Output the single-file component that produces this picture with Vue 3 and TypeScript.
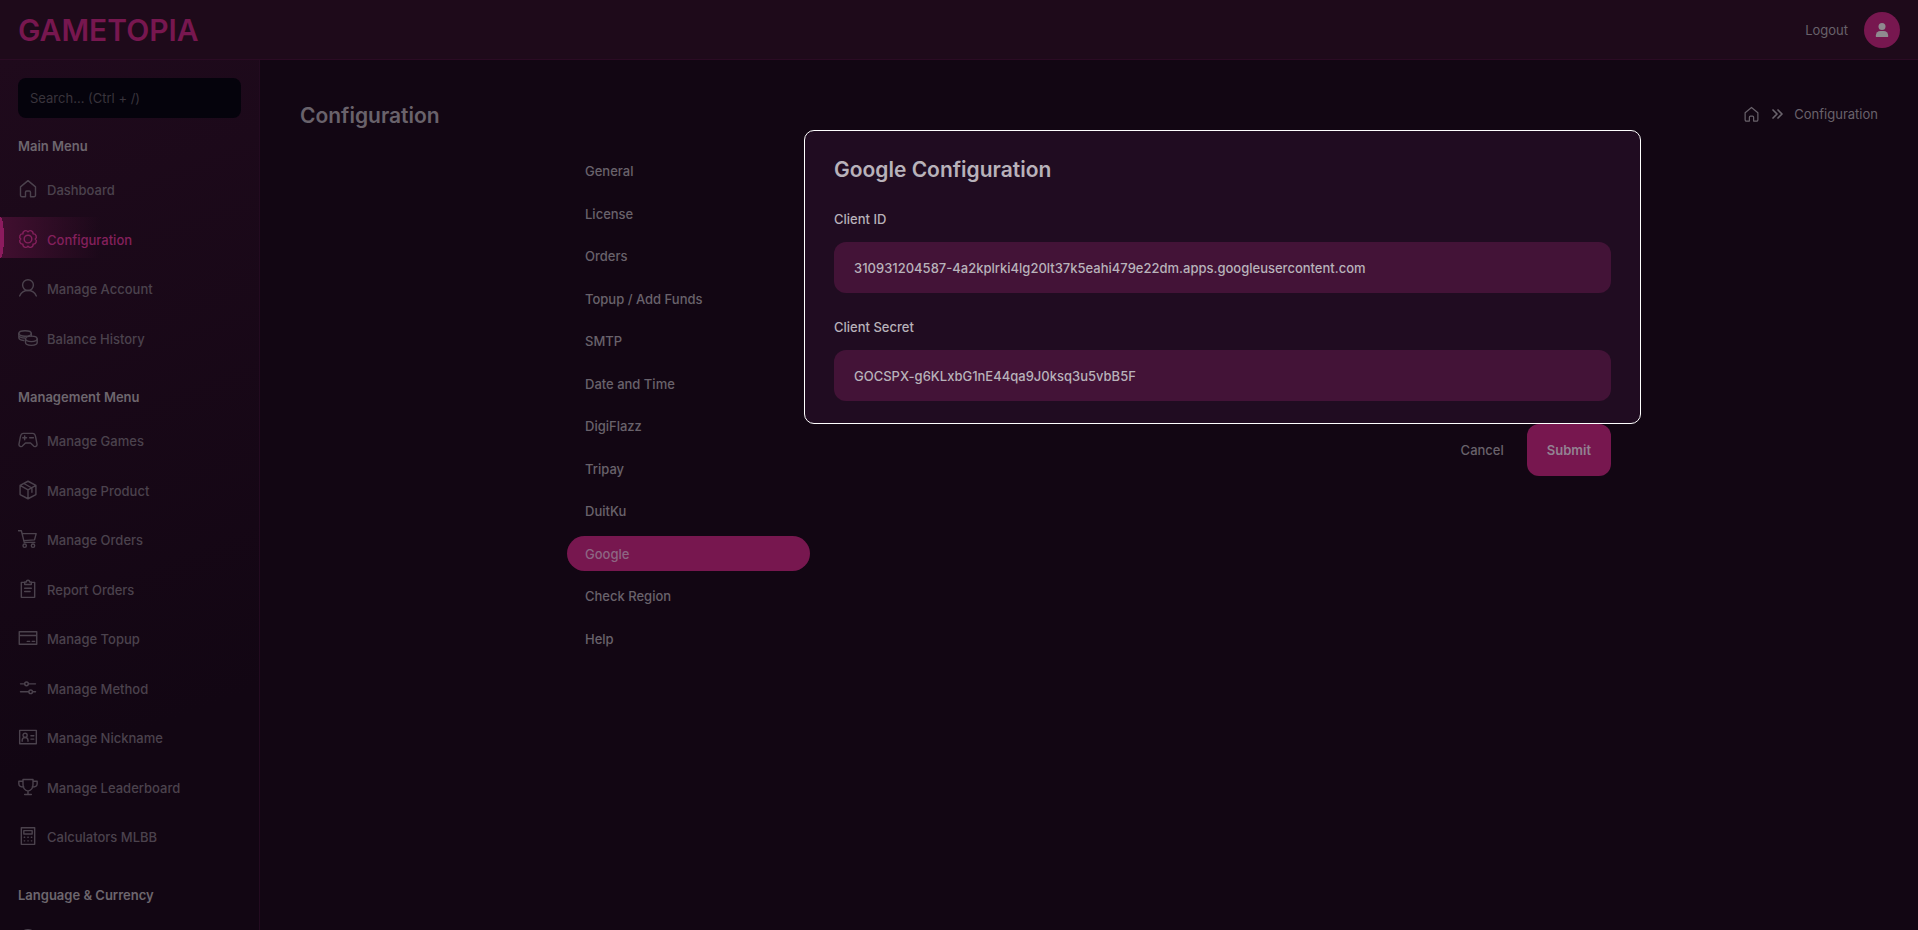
<script setup lang="ts">
import { ref } from 'vue'

interface Item { label: string; icon: string; iconOnly?: boolean }
interface Group { title: string; items: Item[] }

const icons: Record<string, string> = {
  home: '<path d="M3 9.500v10a1.800 1.800 0 0 0 1.800 1.800h4.200v-5.500a1.500 1.500 0 0 1 1.500-1.500h3a1.500 1.500 0 0 1 1.500 1.500v5.500h4.200a1.800 1.800 0 0 0 1.800-1.800v-10L12 2Z"/>',
  gear: '<circle cx="12" cy="12" r="4.600"/><path d="M12 3.400A3.400 3.400 0 0 1 18.100 5.900A3.400 3.400 0 0 1 20.600 12A3.400 3.400 0 0 1 18.100 18.100A3.400 3.400 0 0 1 12 20.600A3.400 3.400 0 0 1 5.900 18.100A3.400 3.400 0 0 1 3.400 12A3.400 3.400 0 0 1 5.900 5.900A3.400 3.400 0 0 1 12 3.400Z"/>',
  user: '<circle cx="12" cy="8.500" r="6.500"/><path d="M2 21.500c1.700-4 5-6.500 10-6.500s8.300 2.500 10 6.500"/>',
  coins: '<ellipse cx="8.500" cy="6.500" rx="7.500" ry="3.300"/><path d="M1 6.500v5c0 2 2.500 3.300 6 3.500M16 6.500v3M1 9.500c1 1.500 3.500 2.500 7 2.500"/><ellipse cx="16" cy="13" rx="7" ry="3.300"/><path d="M9 13v4.500c0 2 3 3.300 7 3.300s7-1.300 7-3.300V13"/>',
  games: '<path d="M6.500 4h11c2.500 0 3.300 2 3.700 4.500l1.600 8.500c.4 2.500-2.700 4-4.300 2L15 15.500H9L5.500 19c-1.600 2-4.700.5-4.300-2l1.600-8.500C3.200 6 4 4 6.500 4ZM8 7v4.600M5.700 9.300h4.600M14 9.300h4.500"/>',
  box: '<path d="m12 1.500 9.500 5v11L12 22.500l-9.500-5v-11ZM2.500 6.500 12 11.800l9.500-5.300M12 11.800v10.700M7 4.200l9.700 5.400v5.200"/>',
  cart: '<path d="M.5 2H4l3.500 14h12.700M4.800 5.500h17l-2 7.500L6.800 14"/><circle cx="8" cy="20" r="2"/><circle cx="18" cy="20" r="2"/>',
  clipboard: '<path d="M8 4H4v18h16V4h-4M8 6.500h8V3.500h-2c0-1-1-2-2-2s-2 1-2 2H8ZM8 11h8M8 15h6.500"/>',
  card: '<path d="M1.500 4.500h21v15h-21ZM1.500 9h21M11 16h3M17 16h3"/>',
  sliders: '<path d="M3 7h5M12.500 7H21M3 16.500h10M17.500 16.500H21"/><circle cx="10.200" cy="7" r="2.200"/><circle cx="15.200" cy="16.500" r="2.200"/>',
  id: '<path d="M2 4h20v16H2ZM5 17v-1c0-2.500 1.500-3.500 3.500-3.500s3.500 1 3.500 3.500v1M15.500 10.500H19M15.500 14.500H19"/><circle cx="8.500" cy="10" r="2.500"/>',
  trophy: '<path d="M6 3h12v6c0 4-2 7-6 8-4-1-6-4-6-8ZM6 5H1v3c0 2.500 2 4 6 4M18 5h5v3c0 2.500-2 4-6 4M12 17v4M8 21h8"/>',
  calc: '<path d="M4 2h16v20H4ZM7 5.500h10v4H7ZM7.500 13.500h.5M11.800 13.500h.5M16 13.500h.5M7.500 17.800h.5M11.800 17.800h.5M16 17.800h.5"/>',
  globe: '<circle cx="12" cy="12" r="10"/><path d="M2 12h20M12 2v20"/>',
}

const groups: Group[] = [
  { title: 'Main Menu', items: [
    { label: 'Dashboard', icon: 'home' },
    { label: 'Configuration', icon: 'gear' },
    { label: 'Manage Account', icon: 'user' },
    { label: 'Balance History', icon: 'coins' },
  ] },
  { title: 'Management Menu', items: [
    { label: 'Manage Games', icon: 'games' },
    { label: 'Manage Product', icon: 'box' },
    { label: 'Manage Orders', icon: 'cart' },
    { label: 'Report Orders', icon: 'clipboard' },
    { label: 'Manage Topup', icon: 'card' },
    { label: 'Manage Method', icon: 'sliders' },
    { label: 'Manage Nickname', icon: 'id' },
    { label: 'Manage Leaderboard', icon: 'trophy' },
    { label: 'Calculators MLBB', icon: 'calc' },
  ] },
  { title: 'Language & Currency', items: [{ label: 'Language', icon: 'globe', iconOnly: true }] },
]

const tabs = ['General', 'License', 'Orders', 'Topup / Add Funds', 'SMTP', 'Date and Time', 'DigiFlazz', 'Tripay', 'DuitKu', 'Google', 'Check Region', 'Help']
const activeTab = ref('Google')
const clientId = ref('310931204587-4a2kplrki4lg20lt37k5eahi479e22dm.apps.googleusercontent.com')
const clientSecret = ref('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')
const search = ref('')
</script>

<template>
  <div class="app">
    <header class="topbar">
      <a class="logo" href="#">GAMETOPIA</a>
      <div class="account">
        <a href="#">Logout</a>
        <button class="avatar" type="button" aria-label="Account">
          <svg viewBox="0 0 16 16" width="14" height="16"><circle cx="8" cy="4" r="4" /><path d="M1 16v-2a5 5 0 0 1 5-5h4a5 5 0 0 1 5 5v2Z" /></svg>
        </button>
      </div>
    </header>
    <div class="body">
      <aside class="sidebar">
        <input v-model="search" class="search" type="text" aria-label="Search" placeholder="Search... (Ctrl + /)">
        <nav v-for="g in groups" :key="g.title" class="group" :aria-label="g.title">
          <h2>{{ g.title }}</h2>
          <a v-for="i in g.items" :key="i.label" href="#" class="item" :class="{ active: i.label === 'Configuration' }" :aria-label="i.label">
            <svg class="line" viewBox="0 0 24 24" width="20" height="20" v-html="icons[i.icon]" />
            <span v-if="!i.iconOnly">{{ i.label }}</span>
          </a>
        </nav>
      </aside>
      <main class="main">
        <div class="heading">
          <h1>Configuration</h1>
          <nav class="crumbs" aria-label="Breadcrumb">
            <a href="#" aria-label="Home"><svg class="line" viewBox="0 0 24 24" width="17" height="17" v-html="icons.home" /></a>
            <svg class="line chevrons" viewBox="0 0 12 12" width="12" height="12"><path d="m2 2 4 4-4 4M7 2l4 4-4 4" /></svg>
            <span>Configuration</span>
          </nav>
        </div>
        <div class="content">
          <div class="tabs">
            <button v-for="t in tabs" :key="t" type="button" :class="{ active: t === activeTab }" @click="activeTab = t">{{ t }}</button>
          </div>
          <form class="form" @submit.prevent>
            <section class="panel">
              <h2>Google Configuration</h2>
              <div class="field">
                <label for="client-id">Client ID</label>
                <input id="client-id" v-model="clientId" type="text">
              </div>
              <div class="field">
                <label for="client-secret">Client Secret</label>
                <input id="client-secret" v-model="clientSecret" type="text">
              </div>
            </section>
            <div class="actions">
              <button class="cancel" type="button">Cancel</button>
              <button class="submit" type="submit">Submit</button>
            </div>
          </form>
        </div>
      </main>
    </div>
  </div>
</template>

<style>
body { margin: 0; background: #120613; }
</style>

<style scoped>
* { box-sizing: border-box; }
.app { height: 100vh; display: flex; flex-direction: column; overflow: hidden; background: #120613; color: #69626b; font: 500 13px/20px Inter, sans-serif; }
a { color: inherit; text-decoration: none; }
button, input { font: inherit; color: inherit; border: 0; margin: 0; }
button { cursor: pointer; }
h1, h2 { margin: 0; }
.line { fill: none; stroke: currentColor; stroke-width: 1.7; stroke-linecap: round; stroke-linejoin: round; flex: none; }
.topbar { height: 60px; flex: none; display: flex; align-items: center; justify-content: space-between; padding: 0 18px; background: #1e0a1a; border-bottom: 1px solid #2b0b24; }
.logo { color: #77174f; font-size: 30px; line-height: 36px; font-weight: 600; }
.account { display: flex; align-items: center; gap: 16px; font-weight: 400; }
.avatar { width: 36px; height: 36px; border-radius: 50%; background: #77174f; display: grid; place-items: center; padding: 0; }
.avatar svg { fill: #8f8a8f; }
.body { flex: 1; min-height: 0; display: flex; }
.sidebar { width: 260px; flex: none; overflow: hidden; padding-top: 18px; background: linear-gradient(160deg, #1f0a1c, #120613 75%); border-right: 1px solid #230b20; }
.search { display: block; width: calc(100% - 36px); height: 40px; margin: 0 18px; padding: 0 12px; border-radius: 8px; background: #05030c; font-weight: 400; }
.search::placeholder { color: #39343c; opacity: 1; }
.group { margin-bottom: 30px; }
.group h2 { font-size: 13px; line-height: 20px; font-weight: 600; color: #6d666e; padding: 0 18px; margin: 18px 0 11px; }
.item { height: 41px; margin-bottom: 9px; padding: 3px 18px 0; display: flex; align-items: center; gap: 9px; color: #4b424d; }
.item:nth-of-type(even) { margin-bottom: 8px; }
.item span { padding-top: 2px; }
.item.active { color: #84205c; background: radial-gradient(ellipse at left, #8c1b5e 0 4px, transparent 4px) left / 4px 100% no-repeat, linear-gradient(90deg, #420f30, transparent 100px); }
.main { flex: 1; min-width: 0; padding: 40px; }
.heading { display: flex; justify-content: space-between; height: 30px; }
h1 { font-size: 21px; line-height: 32px; font-weight: 600; }
.panel h2 { font-size: 21px; line-height: 30px; font-weight: 600; }
.crumbs { display: flex; align-items: center; height: 28px; gap: 11px; font-weight: 400; }
.crumbs a { display: flex; }
.content { display: grid; grid-template-columns: 243px 1fr; column-gap: 24px; max-width: 1044px; margin: 0 auto; }
.tabs { display: flex; flex-direction: column; padding-top: 23px; }
.tabs button { height: 35px; margin-bottom: 8px; border-radius: 18px; padding: 0 18px; background: none; text-align: left; }
.tabs button:nth-child(even) { margin-bottom: 7px; }
.tabs .active { background: #77174f; color: #8d6683; }
.form { min-width: 0; }
.panel { position: relative; margin: 0 -30px; border: 1px solid #fff; border-radius: 10px; background: #200c21; padding: 24px 29px 22px; color: #b8b2ba; display: flex; flex-direction: column; gap: 24px; }
.field { display: flex; flex-direction: column; gap: 13px; }
.field input { width: 100%; height: 51px; border-radius: 12px; background: #431337; padding: 0 20px; }
.actions { display: flex; justify-content: flex-end; gap: 3px; }
.actions button { height: 52px; padding: 0 20px; border-radius: 12px; background: none; }
.actions .submit { background: #77174f; color: #938292; font-weight: 600; }
</style>
